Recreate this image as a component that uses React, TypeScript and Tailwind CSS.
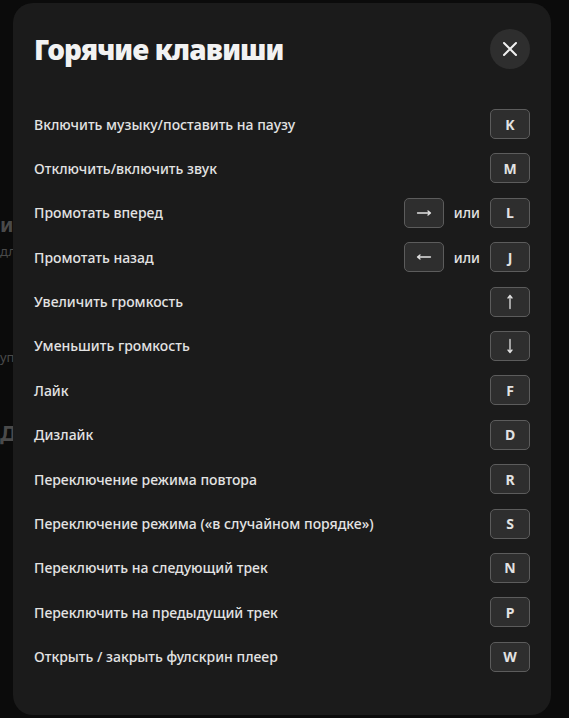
import React from "react";

type K = "K" | "M" | "L" | "J" | "F" | "D" | "R" | "S" | "N" | "P" | "W" | "right" | "left" | "up" | "down";

const rows: { label: string; keys: K[] }[] = [
  { label: "Включить музыку/поставить на паузу", keys: ["K"] },
  { label: "Отключить/включить звук", keys: ["M"] },
  { label: "Промотать вперед", keys: ["right", "L"] },
  { label: "Промотать назад", keys: ["left", "J"] },
  { label: "Увеличить громкость", keys: ["up"] },
  { label: "Уменьшить громкость", keys: ["down"] },
  { label: "Лайк", keys: ["F"] },
  { label: "Дизлайк", keys: ["D"] },
  { label: "Переключение режима повтора", keys: ["R"] },
  { label: "Переключение режима («в случайном порядке»)", keys: ["S"] },
  { label: "Переключить на следующий трек", keys: ["N"] },
  { label: "Переключить на предыдущий трек", keys: ["P"] },
  { label: "Открыть / закрыть фулскрин плеер", keys: ["W"] },
];

function Arrow({ dir }: { dir: "right" | "left" | "up" | "down" }) {
  const rot = { right: 0, down: 90, left: 180, up: 270 }[dir];
  return (
    <svg width="16" height="16" viewBox="0 0 16 16" fill="none" style={{ transform: `rotate(${rot}deg)` }}>
      <path d="M1.5 8H14.5M12 6L14.5 8L12 10" stroke="#e2e2e2" strokeWidth="1.3" strokeLinecap="round" strokeLinejoin="round" />
    </svg>
  );
}

function Key({ k }: { k: K }) {
  const isArrow = k === "right" || k === "left" || k === "up" || k === "down";
  return (
    <div className="flex h-[30px] w-[40px] items-center justify-center rounded-[5px] border border-[#5c5c5c] bg-[#2e2e2e] text-[14px] font-bold text-[#e2e2e2]">
      {isArrow ? <Arrow dir={k as "right" | "left" | "up" | "down"} /> : k}
    </div>
  );
}

export default function App() {
  return (
    <div
      className="relative h-[718px] w-[569px] overflow-hidden bg-[#0b0b0b]"
      style={{ fontFamily: '"Noto Sans", "Open Sans", sans-serif' }}
    >
      {/* dimmed page content behind the modal */}
      <div className="flex flex-col pt-[212px] text-[#4a4a4a]">
        <div className="text-[20px] font-bold leading-[26px]">их</div>
        <div className="mt-[4px] text-[13px] leading-[18px]">для</div>
        <div className="mt-[88px] text-[13px] leading-[18px]">уп</div>
        <div className="mt-[52px] text-[22px] font-bold leading-[28px]">До</div>
      </div>

      {/* modal */}
      <div className="absolute left-[13px] top-[3px] flex h-[712px] w-[538px] flex-col rounded-[20px] bg-[#1b1b1b] px-[21px] pt-[26px]">
        <div className="flex h-[40px] items-center justify-between">
          <h1 className="text-[28px] font-black leading-none tracking-[-0.9px] text-[#f2f2f2]">
            Горячие клавиши
          </h1>
          <button className="flex h-[40px] w-[40px] items-center justify-center rounded-full bg-[#2e2e2e]">
            <svg width="16" height="16" viewBox="0 0 16 16" fill="none">
              <path d="M2 2L14 14M14 2L2 14" stroke="#f0f0f0" strokeWidth="2" strokeLinecap="round" />
            </svg>
          </button>
        </div>

        <div className="mt-[40px] flex flex-col gap-[14.4px]">
          {rows.map((r) => (
            <div key={r.label} className="flex h-[30px] items-center justify-between">
              <span className="text-[14px] font-medium text-[#e3e3e3]">{r.label}</span>
              <div className="flex items-center">
                {r.keys.length === 2 ? (
                  <>
                    <Key k={r.keys[0]} />
                    <span className="mx-[10px] text-[14px] font-medium text-[#e3e3e3]">или</span>
                    <Key k={r.keys[1]} />
                  </>
                ) : (
                  <Key k={r.keys[0]} />
                )}
              </div>
            </div>
          ))}
        </div>
      </div>
    </div>
  );
}
